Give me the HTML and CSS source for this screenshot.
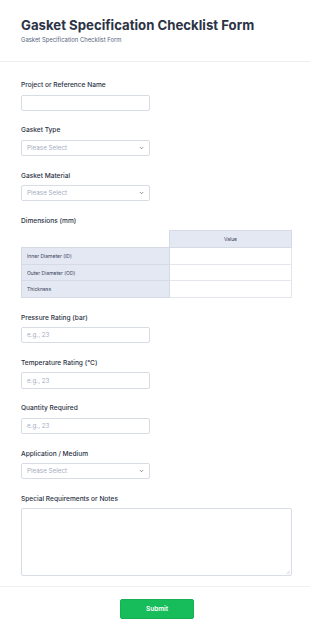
FILE: index.html
```html
<!DOCTYPE html>
<html lang="en">
<head>
<meta charset="utf-8">
<title>Gasket Specification Checklist Form</title>
<link rel="stylesheet" href="styles.css">
</head>
<body>
<div class="page">
  <header class="header">
    <h1 class="title">Gasket Specification Checklist Form</h1>
    <p class="subtitle">Gasket Specification Checklist Form</p>
  </header>
  <main class="form">
    <div class="field">
      <div class="label">Project or Reference Name</div>
      <div class="input"></div>
    </div>
    <div class="field">
      <div class="label">Gasket Type</div>
      <div class="input select"><span class="ph">Please Select</span><svg class="chev" width="5" height="4" viewBox="0 0 5 4"><path d="M1 1.2l1.5 1.5 1.5-1.5" fill="none" stroke="#6b7488" stroke-width="0.9"/></svg></div>
    </div>
    <div class="field">
      <div class="label">Gasket Material</div>
      <div class="input select"><span class="ph">Please Select</span><svg class="chev" width="5" height="4" viewBox="0 0 5 4"><path d="M1 1.2l1.5 1.5 1.5-1.5" fill="none" stroke="#6b7488" stroke-width="0.9"/></svg></div>
    </div>
    <div class="field">
      <div class="label">Dimensions (mm)</div>
      <table class="matrix">
        <tr><th class="empty"></th><th class="colhead">Value</th></tr>
        <tr><td class="rowhead">Inner Diameter (ID)</td><td class="cell"></td></tr>
        <tr><td class="rowhead">Outer Diameter (OD)</td><td class="cell"></td></tr>
        <tr><td class="rowhead">Thickness</td><td class="cell"></td></tr>
      </table>
    </div>
    <div class="field">
      <div class="label">Pressure Rating (bar)</div>
      <div class="input"><span class="ph">e.g., 23</span></div>
    </div>
    <div class="field">
      <div class="label">Temperature Rating (°C)</div>
      <div class="input"><span class="ph">e.g., 23</span></div>
    </div>
    <div class="field">
      <div class="label">Quantity Required</div>
      <div class="input"><span class="ph">e.g., 23</span></div>
    </div>
    <div class="field">
      <div class="label">Application / Medium</div>
      <div class="input select"><span class="ph">Please Select</span><svg class="chev" width="5" height="4" viewBox="0 0 5 4"><path d="M1 1.2l1.5 1.5 1.5-1.5" fill="none" stroke="#6b7488" stroke-width="0.9"/></svg></div>
    </div>
    <div class="field last">
      <div class="label">Special Requirements or Notes</div>
      <div class="textarea"><svg class="grip" width="4" height="4" viewBox="0 0 4 4"><path d="M4 0.5L0.5 4M4 2.5L2.5 4" stroke="#b9bec9" stroke-width="0.6"/></svg></div>
    </div>
  </main>
  <footer class="footer">
    <button class="submit" type="button">Submit</button>
  </footer>
</div>
</body>
</html>
```

FILE: styles.css
```css
* { box-sizing: border-box; }
html, body { margin: 0; padding: 0; background: #fff; }
body { font-family: Inter, "Noto Sans", sans-serif; color: #2c3345; }
.page { width: 310px; }
.header {
  height: 62px;
  padding: 16px 21px 0;
  border-bottom: 1px solid #eceef2;
}
.title {
  margin: 0;
  font-size: 13.2px;
  line-height: 18px;
  font-weight: 700;
  color: #2c3345;
}
.subtitle {
  margin: 2px 0 0;
  font-size: 5.9px;
  line-height: 8px;
  color: #57647e;
}
.form { padding: 18px 21px 0; }
.field { margin-bottom: 14.5px; }
.field.last { margin-bottom: 0; }
.label {
  font-size: 6.6px;
  line-height: 10px;
  font-weight: 500;
  color: #2c3345;
  margin-bottom: 4.5px;
}
.input {
  width: 129px;
  height: 16.3px;
  border: 1px solid #d8dce5;
  border-radius: 2px;
  background: #fff;
  display: flex;
  align-items: center;
  padding: 0 5px;
}
.select { justify-content: space-between; }
.ph { font-size: 6.3px; color: #a5adbf; }
.chev { display: block; }
.matrix {
  border-collapse: collapse;
  width: 271px;
  table-layout: fixed;
}
.matrix th, .matrix td { height: 16.7px; padding: 0; }
.matrix .empty { width: 148px; }
.colhead {
  background: #e3e8f3;
  border: 1px solid #d5dae5;
  font-size: 5px;
  font-weight: 400;
  color: #3a4256;
}
.rowhead {
  background: #e3e8f3;
  border: 1px solid #d5dae5;
  font-size: 5px;
  color: #3a4256;
  padding-left: 5px !important;
}
.cell { border: 1px solid #e3e6ec; background: #fff; }
.textarea {
  width: 271px;
  height: 67.5px;
  border: 1px solid #d8dce5;
  border-radius: 2px;
  display: flex;
  justify-content: flex-end;
  align-items: flex-end;
  padding: 1px;
}
.grip { display: block; }
.footer {
  margin-top: 10px;
  border-top: 1px solid #eef0f3;
  padding: 12px 0 0 4px;
  display: flex;
  justify-content: center;
}
.submit {
  width: 74px;
  height: 20px;
  background: #18bd5b;
  border: 1px solid #16b055;
  border-radius: 2px;
  color: #fff;
  font-family: Inter, "Noto Sans", sans-serif;
  font-size: 6.5px;
  font-weight: 600;
  padding: 0;
}
```
